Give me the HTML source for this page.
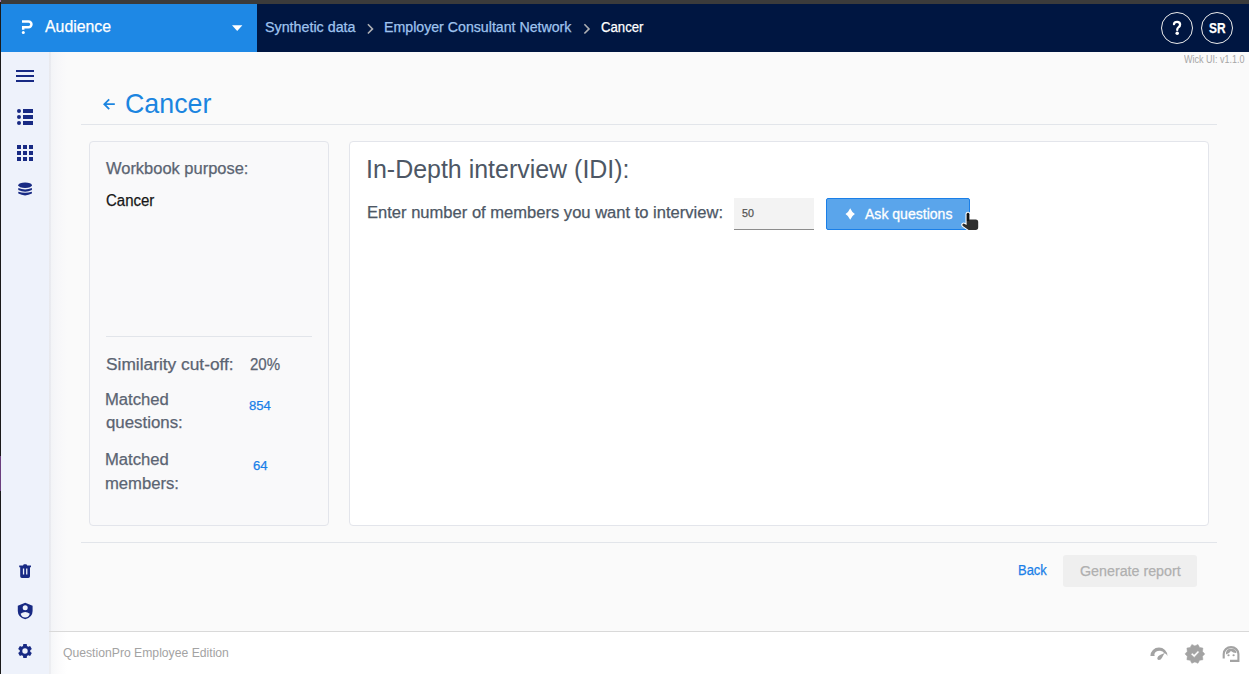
<!DOCTYPE html>
<html><head><meta charset="utf-8">
<style>
*{box-sizing:border-box;margin:0;padding:0}
html,body{width:1249px;height:674px;overflow:hidden;font-family:"Liberation Sans",sans-serif;background:#fafafa;position:relative}
.abs{position:absolute}
.t{position:absolute;white-space:nowrap;transform-origin:0 0;-webkit-text-stroke:0.25px currentColor}
#topstrip{left:0;top:0;width:1249px;height:4px;background:#3b3b3b}
#leftedge{left:0;top:0;width:1px;height:674px;background:#1a1a1a}
#hdrblue{left:1px;top:4px;width:256px;height:48px;background:#1e88e5}
#hdrnavy{left:257px;top:4px;width:992px;height:48px;background:#001641}
#sidebar{left:1px;top:52px;width:48px;height:622px;background:#eef2fb}
#footshade{left:49px;top:632px;width:18px;height:42px;background:linear-gradient(to right,#ebecf0 0,#eeeff2 2px,#f6f7f9 2.5px,#fbfbfc 9px,#ffffff 18px)}
#sideshade{left:49px;top:52px;width:18px;height:579px;background:linear-gradient(to right,#e8e9ee 0,#eaebf0 2px,#f3f4f7 2.5px,#f7f7f9 9px,#fafafa 18px)}
#footer{left:49px;top:631px;width:1200px;height:43px;background:#fff;border-top:1px solid #d9d9d9}
.hr{position:absolute;height:1px;background:#e2e5ea}
.card{position:absolute;border:1px solid #e3e5eb;border-radius:4px}
.circ{position:absolute;width:32px;height:32px;border:1.6px solid #ececec;border-radius:50%}
</style></head><body>
<div class="abs" id="topstrip"></div>
<div class="abs" id="hdrblue"></div>
<div class="abs" id="hdrnavy"></div>
<div class="abs" id="sidebar"></div>
<div class="abs" id="sideshade"></div>
<div class="abs" id="leftedge"></div>
<div class="abs" style="left:0;top:0;width:1px;height:2px;background:#a87fbf"></div>
<div class="abs" style="left:0;top:456px;width:1px;height:35px;background:#6b3f7e"></div>
<div class="abs" id="footer"></div>
<div class="abs" id="footshade"></div>

<!-- header icons -->
<svg class="abs" style="left:0;top:0" width="260" height="52" viewBox="0 0 260 52">
  <path d="M22 21.4 H28.6 A2.85 2.95 0 0 1 28.6 27.3 H23.2 V29.7" fill="none" stroke="#fff" stroke-width="2.5"/>
  <circle cx="23.3" cy="32.4" r="1.5" fill="#fff"/>
  <path d="M232 25.2 L242.4 25.2 L237.2 31 Z" fill="#fff"/>
</svg>
<svg class="abs" style="left:0;top:0" width="700" height="52" viewBox="0 0 700 52">
  <path d="M367.9 24.3 L372.5 28.9 L367.9 33.5" fill="none" stroke="#aeb0b4" stroke-width="1.6"/>
  <path d="M584.4 24.3 L589 28.9 L584.4 33.5" fill="none" stroke="#aeb0b4" stroke-width="1.6"/>
</svg>
<div class="circ" style="left:1161px;top:11.7px"></div>
<svg class="abs" style="left:1160px;top:10px" width="34" height="34" viewBox="1160 10 34 34">
  <path d="M1174 24.2 Q1174.3 21.9 1177.1 21.9 Q1180.1 21.9 1180.1 24.6 Q1180.1 26.3 1178.4 27.4 Q1177.2 28.2 1177.2 29.9" fill="none" stroke="#fff" stroke-width="2.3" stroke-linecap="round"/>
  <circle cx="1177.2" cy="33.3" r="1.75" fill="#fff"/>
</svg>
<div class="circ" style="left:1201px;top:11.7px"></div>

<!-- sidebar icons -->
<svg class="abs" style="left:0;top:0" width="50" height="674" viewBox="0 0 50 674" fill="#182a84">
  <rect x="16" y="70" width="18" height="2"/>
  <rect x="16" y="75" width="18" height="2"/>
  <rect x="16" y="80" width="18" height="2"/>
  <circle cx="19" cy="111" r="2"/><circle cx="19" cy="117" r="2"/><circle cx="19" cy="123" r="2"/>
  <rect x="23" y="109" width="10" height="4"/><rect x="23" y="115" width="10" height="4"/><rect x="23" y="121" width="10" height="4"/>
  <rect x="17" y="145" width="4" height="4"/><rect x="23" y="145" width="4" height="4"/><rect x="29" y="145" width="4" height="4"/>
  <rect x="17" y="151" width="4" height="4"/><rect x="23" y="151" width="4" height="4"/><rect x="29" y="151" width="4" height="4"/>
  <rect x="17" y="157" width="4" height="4"/><rect x="23" y="157" width="4" height="4"/><rect x="29" y="157" width="4" height="4"/>
  <ellipse cx="25.1" cy="185.25" rx="6.8" ry="2.7"/>
  <path d="M18.3 188.1 Q25.1 190.7 31.9 188.1 V190.1 Q25.1 193.3 18.3 190.1 Z"/>
  <path d="M18.3 191.7 Q25.1 193.7 31.9 191.7 V193.6 Q25.1 197.2 18.3 193.6 Z"/>
  <!-- trash -->
  <path d="M19.2 565.4 H23 L23.8 564.2 H26.4 L27.2 565.4 H31 V567.3 H19.2 Z"/>
  <path d="M20.2 567 H30 V576.3 Q30 578 28.3 578 H21.9 Q20.2 578 20.2 576.3 Z M22.9 568.4 V574.4 H24.2 V568.4 Z M26.1 568.4 V574.4 H27.4 V568.4 Z" fill-rule="evenodd"/>
  <!-- shield -->
  <path d="M25.2 602.8 L32.6 605.8 V611 Q32.6 617.2 25.2 619.2 Q17.8 617.2 17.8 611 V605.8 Z M25.2 605.3 A2.5 2.5 0 1 0 25.2 610.3 A2.5 2.5 0 1 0 25.2 605.3 Z M20.6 613.7 Q25.2 610.3 29.8 613.7 C29 616.5 27.3 617.5 25.2 617.5 C23.1 617.5 21.4 616.5 20.6 613.7 Z" fill-rule="evenodd"/>
  <!-- gear -->
  <path fill-rule="evenodd" d="M23.01 646.09 L23.28 644.11 L26.72 644.11 L26.99 646.09 L28.26 646.82 L30.11 646.07 L31.82 649.04 L30.25 650.26 L30.25 651.74 L31.82 652.96 L30.11 655.93 L28.26 655.18 L26.99 655.91 L26.72 657.89 L23.28 657.89 L23.01 655.91 L21.74 655.18 L19.89 655.93 L18.18 652.96 L19.75 651.74 L19.75 650.26 L18.18 649.04 L19.89 646.07 L21.74 646.82 Z M25 648.3 A2.7 2.7 0 1 0 25 653.7 A2.7 2.7 0 1 0 25 648.3 Z"/>
</svg>

<!-- main -->
<svg class="abs" style="left:100px;top:96px" width="20" height="16" viewBox="0 0 20 16">
  <path d="M4.5 8.2 H14.8 M9.2 3.3 L4.3 8.2 L9.2 13.1" fill="none" stroke="#1b85e0" stroke-width="1.8"/>
</svg>
<div class="hr" style="left:81px;top:124px;width:1136px"></div>
<div class="card" style="left:89px;top:141px;width:240px;height:385px;background:#f9f9fa"></div>
<div class="card" style="left:349px;top:141px;width:860px;height:385px;background:#ffffff"></div>
<div class="hr" style="left:106px;top:336px;width:206px"></div>
<div class="abs" style="left:734px;top:198px;width:80px;height:32px;background:#f3f3f3;border-bottom:1px solid #8c8c8c"></div>
<div class="abs" style="left:826px;top:198px;width:144px;height:32px;background:#5aa5eb;border:1px solid #1a7fe8;border-radius:2px"></div>
<svg class="abs" style="left:840px;top:204px" width="20" height="20" viewBox="0 0 20 20">
  <path d="M10.2 4.2 Q11.9 8.2 14.9 9.9 Q11.9 11.6 10.2 15.8 Q8.5 11.6 5.5 9.9 Q8.5 8.2 10.2 4.2 Z" fill="#fff"/>
</svg>
<div class="hr" style="left:81px;top:542px;width:1136px"></div>
<div class="abs" style="left:1063px;top:555px;width:134px;height:32px;background:#efefef;border-radius:3px"></div>

<!-- footer icons -->
<svg class="abs" style="left:1140px;top:636px" width="109" height="38" viewBox="1140 636 109 38" fill="#a3a3a3">
  <path d="M1150.4 655.9 A8.55 8.5 0 0 1 1167.5 655.9 Q1166.2 653.6 1164.3 653.2 A4.9 3.6 0 0 0 1154.7 655.9 Z"/>
  <path d="M1157.3 658.1 Q1157.8 656.3 1160 655.1 L1164.6 653.1 L1162 657.7 Q1160.8 660.3 1158.6 660.1 Q1157 659.7 1157.3 658.1 Z"/>
  <path fill-rule="evenodd" stroke="#a3a3a3" stroke-width="0.5" stroke-linejoin="round" d="M1204.80 653.90 L1202.51 651.43 L1202.91 648.08 L1199.60 647.43 L1197.96 644.48 L1194.90 645.90 L1191.84 644.48 L1190.20 647.43 L1186.89 648.08 L1187.29 651.43 L1185.00 653.90 L1187.29 656.37 L1186.89 659.72 L1190.20 660.37 L1191.84 663.32 L1194.90 661.90 L1197.96 663.32 L1199.60 660.37 L1202.91 659.72 L1202.51 656.37 Z M1190.9 654.3 L1194.2 657.4 L1199.3 652.1 L1197.9 650.7 L1194.2 654.6 L1192.3 652.9 Z"/>
  <path d="M1223.7 658.6 V654 A7.35 6.9 0 0 1 1238.4 654 V660.9 H1230" fill="none" stroke="#a3a3a3" stroke-width="2.1"/>
  <path d="M1225.9 654.4 Q1225.6 648.7 1231 648.7 Q1236.4 648.7 1236.4 653 Q1233.3 653.2 1230.9 650.9 Q1229 653.9 1225.9 654.4 Z"/>
  <ellipse cx="1228.5" cy="655.3" rx="1.15" ry="0.95"/><ellipse cx="1233.6" cy="655.3" rx="1.15" ry="0.95"/>
</svg>

<div class="t" style="left:45.10px;top:18.90px;font-size:16px;line-height:16px;font-weight:400;color:#ffffff;transform:scaleX(0.9907)">Audience</div>
<div class="t" style="left:265.00px;top:19.80px;font-size:14px;line-height:14px;font-weight:400;color:#9fc3ee;transform:scaleX(1.0198)">Synthetic data</div>
<div class="t" style="left:384.19px;top:19.80px;font-size:14px;line-height:14px;font-weight:400;color:#9fc3ee;transform:scaleX(1.0120)">Employer Consultant Network</div>
<div class="t" style="left:601.40px;top:19.80px;font-size:14px;line-height:14px;font-weight:400;color:#ffffff;transform:scaleX(0.9413)">Cancer</div>
<div class="t" style="left:1208.80px;top:20.20px;font-size:15px;line-height:15px;font-weight:700;color:#ffffff;transform:scaleX(0.7951)">SR</div>
<div class="t" style="left:1183.90px;top:54.70px;font-size:10px;line-height:10px;font-weight:400;color:#a6a6a6;transform:scaleX(0.9014);-webkit-text-stroke:0">Wick UI: v1.1.0</div>
<div class="t" style="left:125.14px;top:90.10px;font-size:28px;line-height:28px;font-weight:400;color:#1b85e0;transform:scaleX(0.9580);-webkit-text-stroke:0">Cancer</div>
<div class="t" style="left:106.10px;top:160.80px;font-size:16px;line-height:16px;font-weight:400;color:#5b6472;transform:scaleX(1.0285)">Workbook purpose:</div>
<div class="t" style="left:106.10px;top:193.00px;font-size:16px;line-height:16px;font-weight:400;color:#161616;transform:scaleX(0.9378)">Cancer</div>
<div class="t" style="left:106.40px;top:356.70px;font-size:16px;line-height:16px;font-weight:400;color:#5b6472;transform:scaleX(1.0823)">Similarity cut-off:</div>
<div class="t" style="left:250.10px;top:356.70px;font-size:16px;line-height:16px;font-weight:400;color:#5b6472;transform:scaleX(0.9403)">20%</div>
<div class="t" style="left:105.36px;top:392.00px;font-size:16px;line-height:16px;font-weight:400;color:#5b6472;transform:scaleX(1.0392)">Matched</div>
<div class="t" style="left:106.40px;top:415.40px;font-size:16px;line-height:16px;font-weight:400;color:#5b6472;transform:scaleX(1.0519)">questions:</div>
<div class="t" style="left:249.40px;top:399.30px;font-size:13px;line-height:13px;font-weight:400;color:#1a7fe8;transform:scaleX(1.0065)">854</div>
<div class="t" style="left:105.36px;top:452.00px;font-size:16px;line-height:16px;font-weight:400;color:#5b6472;transform:scaleX(1.0392)">Matched</div>
<div class="t" style="left:105.36px;top:475.50px;font-size:16px;line-height:16px;font-weight:400;color:#5b6472;transform:scaleX(1.0396)">members:</div>
<div class="t" style="left:253.40px;top:458.50px;font-size:13px;line-height:13px;font-weight:400;color:#1a7fe8;transform:scaleX(1.0119)">64</div>
<div class="t" style="left:365.72px;top:155.50px;font-size:26.5px;line-height:26.5px;font-weight:400;color:#4d5765;transform:scaleX(0.9418);-webkit-text-stroke:0">In-Depth interview (IDI):</div>
<div class="t" style="left:366.57px;top:205.00px;font-size:16px;line-height:16px;font-weight:400;color:#4d5765;transform:scaleX(1.0345)">Enter number of members you want to interview:</div>
<div class="t" style="left:741.90px;top:207.80px;font-size:11px;line-height:11px;font-weight:400;color:#555555;transform:scaleX(0.9738)">50</div>
<div class="t" style="left:865.30px;top:206.80px;font-size:14px;line-height:14px;font-weight:400;color:#ffffff;-webkit-text-stroke:0.3px #fff;transform:scaleX(1.0028)">Ask questions</div>
<div class="t" style="left:1017.67px;top:562.90px;font-size:14px;line-height:14px;font-weight:400;color:#1a7fe8;transform:scaleX(0.9253)">Back</div>
<div class="t" style="left:1080.00px;top:564.30px;font-size:14px;line-height:14px;font-weight:400;color:#b0b0b0;transform:scaleX(1.0188)">Generate report</div>
<div class="t" style="left:63.10px;top:647.00px;font-size:12px;line-height:12px;font-weight:400;color:#a3a3a3;transform:scaleX(1.0151);-webkit-text-stroke:0">QuestionPro Employee Edition</div>

<!-- cursor -->
<svg class="abs" style="left:955px;top:205px" width="30" height="30" viewBox="955 205 30 30">
  <path d="M966.6 214.2 Q966.6 212.8 968 212.8 Q969.4 212.8 969.4 214.2 V219.4 H975.8 Q978.2 219.4 978.2 222 V227.3 Q978.2 229.9 975.6 229.9 H968.6 L962.9 225.9 Q961.8 224.9 962.7 224 Q963.6 223.3 964.7 223.9 L966.6 225.1 Z" fill="#2e2e2e" stroke="#fff" stroke-width="2.2" paint-order="stroke" stroke-linejoin="round"/>
  <path d="M966.9 214.2 Q966.9 213.3 968 213.3 Q969.1 213.3 969.1 214.2 V221 H966.9 Z" fill="#111"/>
</svg>
</body></html>
